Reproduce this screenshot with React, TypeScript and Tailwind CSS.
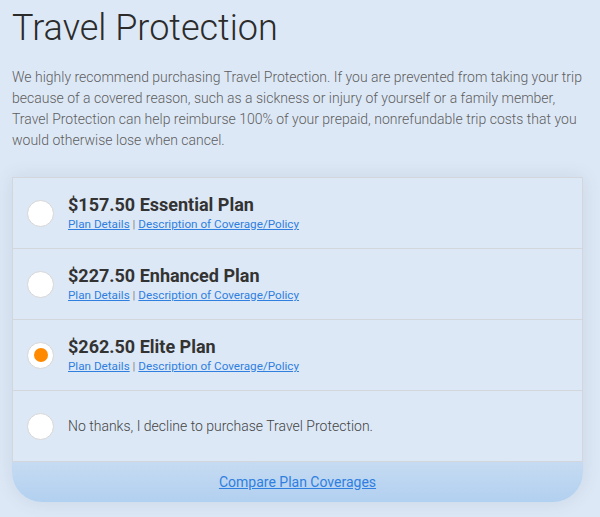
import React, { useState } from 'react';

const plans = [
  { id: 'essential', price: '$157.50', name: 'Essential Plan' },
  { id: 'enhanced', price: '$227.50', name: 'Enhanced Plan' },
  { id: 'elite', price: '$262.50', name: 'Elite Plan' },
];

function Radio({ checked }: { checked: boolean }) {
  return (
    <span className="flex h-[27px] w-[27px] shrink-0 items-center justify-center rounded-full border border-[#d6d6d6] bg-white">
      {checked && <span className="h-[14px] w-[14px] rounded-full bg-[#ff8a00]" />}
    </span>
  );
}

export default function App() {
  const [selected, setSelected] = useState('elite');

  return (
    <div className="min-h-[517px] bg-[#dde8f6] px-3 pt-[6px] pb-4 font-['Roboto',sans-serif]">
      <h1 className="text-[36px] font-light leading-[44px] text-[#2b2b2b]">Travel Protection</h1>
      <p className="mt-[17px] text-[14px] font-light leading-[21px] text-[#5e5e5e]">
        We highly recommend purchasing Travel Protection. If you are prevented from taking your trip
        because of a covered reason, such as a sickness or injury of yourself or a family member,
        Travel Protection can help reimburse 100% of your prepaid, nonrefundable trip costs that you
        would otherwise lose when cancel.
      </p>

      <div className="mt-[26px] w-[571px] rounded-b-[30px] shadow-[0_0_18px_rgba(60,80,110,0.12)]">
        <div className="border border-b-0 border-[#d3d7dc] bg-[#dde8f6]">
          {plans.map((p) => (
            <div
              key={p.id}
              onClick={() => setSelected(p.id)}
              className="flex h-[71px] cursor-pointer items-center border-b border-[#d3d7dc] pl-[14px]"
            >
              <Radio checked={selected === p.id} />
              <div className="ml-[14px] flex flex-col">
                <span className="text-[18px] font-bold leading-[22px] text-[#333]">
                  {p.price} {p.name}
                </span>
                <span className="mt-[1px] text-[11.7px] leading-[15px] text-[#888]">
                  <a href="#" className="text-[#2f7fe0] underline">Plan Details</a>
                  {' | '}
                  <a href="#" className="text-[#2f7fe0] underline">Description of Coverage/Policy</a>
                </span>
              </div>
            </div>
          ))}
          <div
            onClick={() => setSelected('none')}
            className="flex h-[71px] cursor-pointer items-center border-b border-[#d3d7dc] pl-[14px]"
          >
            <Radio checked={selected === 'none'} />
            <span className="ml-[14px] text-[14px] font-light text-[#444]">
              No thanks, I decline to purchase Travel Protection.
            </span>
          </div>
        </div>
        <div className="flex h-[40px] items-center justify-center rounded-b-[30px] bg-gradient-to-b from-[#c6dbf2] to-[#b2d0f0]">
          <a href="#" className="text-[14px] text-[#2f7fe0] underline">Compare Plan Coverages</a>
        </div>
      </div>
    </div>
  );
}
